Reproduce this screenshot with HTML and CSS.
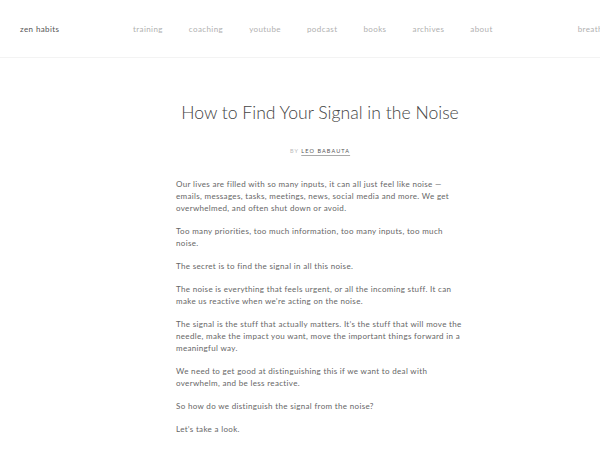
FILE: index.html
```html
<!DOCTYPE html>
<html>
<head>
<meta charset="utf-8">
<link rel="stylesheet" href="styles.css">
</head>
<body>
<header class="site-header">
  <div class="brand">zen habits</div>
  <nav class="nav">
    <a>training</a>
    <a>coaching</a>
    <a>youtube</a>
    <a>podcast</a>
    <a>books</a>
    <a>archives</a>
    <a>about</a>
  </nav>
  <div class="extra">breathe</div>
</header>
<main class="post">
  <h1 class="title">How to Find Your Signal in the Noise</h1>
  <div class="byline"><span class="by">BY</span> <span class="author">LEO BABAUTA</span></div>
  <article class="content">
    <p>Our lives are filled with so many inputs, it can all just feel like noise — emails, messages, tasks, meetings, news, social media and more. We get overwhelmed, and often shut down or avoid.</p>
    <p>Too many priorities, too much information, too many inputs, too much noise.</p>
    <p>The secret is to find the signal in all this noise.</p>
    <p>The noise is everything that feels urgent, or all the incoming stuff. It can make us reactive when we’re acting on the noise.</p>
    <p>The signal is the stuff that actually matters. It’s the stuff that will move the needle, make the impact you want, move the important things forward in a meaningful way.</p>
    <p>We need to get good at distinguishing this if we want to deal with overwhelm, and be less reactive.</p>
    <p>So how do we distinguish the signal from the noise?</p>
    <p>Let’s take a look.</p>
  </article>
</main>
</body>
</html>
```
FILE: styles.css
```css
html, body {
  margin: 0;
  padding: 0;
  background: #fff;
  overflow: hidden;
}
body {
  font-family: "Lato", "Noto Sans", sans-serif;
  color: #555;
  width: 600px;
}
.site-header {
  height: 58px;
  border-bottom: 1px solid #f3f3f3;
  display: flex;
  align-items: center;
  white-space: nowrap;
  overflow: hidden;
  font-size: 8px;
  letter-spacing: 0.4px;
  padding-left: 20px;
  padding-top: 1px;
  box-sizing: border-box;
}
.brand {
  color: #555;
  width: 113px;
  flex: none;
}
.nav {
  display: flex;
  gap: 26px;
  flex: none;
}
.nav a {
  color: #b0b0b0;
}
.extra {
  margin-left: 85px;
  color: #b0b0b0;
  flex: none;
}
.post {
  display: flex;
  flex-direction: column;
  align-items: center;
  padding-left: 40px;
}
.title {
  font-weight: 300;
  font-size: 17.6px;
  color: #444;
  margin: 44px 0 0;
  line-height: 22px;
}
.byline {
  margin-top: 22px;
  font-size: 5.5px;
  letter-spacing: 1.1px;
  line-height: 10px;
}
.by {
  color: #bbb;
}
.author {
  color: #555;
  text-decoration: underline;
  text-decoration-color: #aaa;
  text-underline-offset: 2px;
}
.content {
  width: 288px;
  margin-top: 22px;
  font-size: 8px;
  letter-spacing: 0.33px;
  line-height: 12px;
  color: #666;
}
.content p {
  margin: 0 0 11px;
}
```
